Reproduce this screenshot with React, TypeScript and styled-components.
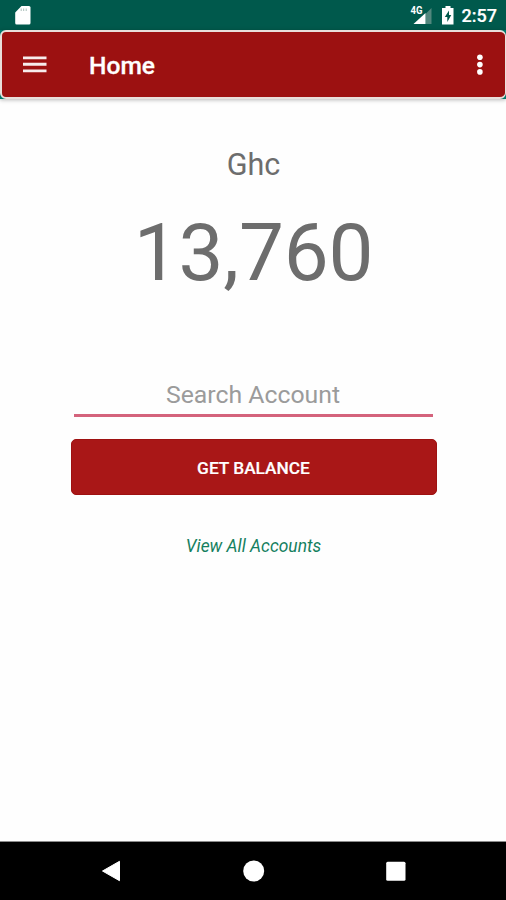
import React from 'react';
import styled, { createGlobalStyle } from 'styled-components';

const GlobalStyle = createGlobalStyle`
  * { box-sizing: border-box; }
  body { margin: 0; background: #fefefe; font-family: Roboto, "Liberation Sans", sans-serif; }
  button, input { font-family: inherit; }
`;

const Screen = styled.div`
  width: 506px;
  height: 900px;
  display: flex;
  flex-direction: column;
  background: #fefefe;
  overflow: hidden;
`;

const StatusBar = styled.div`
  height: 30px;
  flex: none;
  display: flex;
  align-items: flex-start;
  justify-content: space-between;
  background: #00594c;
  padding: 5px 9px 0 15px;
`;

const StatusGroup = styled.div`
  display: flex;
  align-items: flex-start;
`;

const Clock = styled.span`
  margin-left: 6px;
  color: #fff;
  font-size: 18px;
  font-weight: 500;
  line-height: 22px;
  -webkit-text-stroke: 0.2px #fff;
`;

const ToolbarFrame = styled.div`
  height: 69px;
  flex: none;
  background: #00796b;
  box-shadow: 0 1px 4px rgba(0, 0, 0, 0.28);
`;

const Toolbar = styled.header`
  height: 69px;
  display: flex;
  align-items: center;
  padding: 0 22px 0 21px;
  background: #9c1111;
  border: 2px solid #e9dfdb;
  border-right-width: 1px;
  border-radius: 6px;
`;

const IconButton = styled.button`
  display: flex;
  border: 0;
  padding: 0;
  background: none;
`;

const Title = styled.h1`
  flex: 1;
  margin: 3px 0 0 42px;
  color: #fff;
  font-size: 24.6px;
  font-weight: 500;
  line-height: 30px;
  -webkit-text-stroke: 0.3px #fff;
`;

const Content = styled.main`
  flex: 1;
  display: flex;
  flex-direction: column;
  align-items: center;
`;

const Currency = styled.div`
  margin: 48px 0 0 1px;
  color: #6d6d6d;
  font-size: 30.5px;
  line-height: 36px;
`;

const Balance = styled.div`
  margin: 23px 0 0 1px;
  color: #6d6d6d;
  font-size: 80px;
  letter-spacing: -0.2px;
  line-height: 94px;
`;

const SearchField = styled.input`
  width: 359px;
  height: 44px;
  margin-top: 73px;
  padding: 2px 0 0;
  border: 0;
  border-bottom: 3px solid #d4637c;
  background: none;
  text-align: center;
  font-size: 24.8px;
  color: #6d6d6d;
  &::placeholder { color: #9b9b9b; opacity: 1; }
`;

const BalanceButton = styled.button`
  width: 366px;
  height: 56px;
  margin: 22px 0 0 1px;
  padding: 1px 0 0;
  border: 1px solid #9e1111;
  border-radius: 5px;
  background: #a91717;
  color: #fff;
  font-size: 17.3px;
  font-weight: 500;
  -webkit-text-stroke: 0.2px #fff;
`;

const AccountsLink = styled.a`
  margin: 40px 0 0 1px;
  color: #15805f;
  font-size: 17.4px;
  font-style: italic;
  line-height: 22px;
`;

const NavBar = styled.nav`
  height: 59px;
  flex: none;
  display: flex;
  justify-content: space-between;
  align-items: center;
  padding: 0 99px 0 100px;
  border-top: 1px solid #8c8c8c;
  background: #000;
`;

const SdCardIcon = () => (
  <svg width="16" height="20" viewBox="0 0 16 20">
    <path d="M6.500 1H14q1.500 0 1.500 1.500v15.500q0 1.500-1.500 1.500H1.700Q.2 19.500.2 18V7.500Z" fill="#fff" />
    <path d="M6.200 3.500v2.500M8.700 3.500v2.500M11.200 3.500v2.500" stroke="#a9beb8" strokeWidth="1" />
  </svg>
);

const StatusIcons = () => (
  <svg width="46" height="22" viewBox="0 0 46 22">
    <text x="0.500" y="9" fill="#fff" fontSize="10" fontWeight="700" textLength="12" lengthAdjust="spacingAndGlyphs">4G</text>
    <path d="M15.500 9 21.500 3V19H15.500Z" fill="#51877d" />
    <path d="M3.500 19 15.500 8V19Z" fill="#fff" />
    <path d="M35.500 1h5v2h3v16.500h-11.500V3h3.500Z" fill="#fff" />
    <path d="M39 5.500 34.800 12H37.300v5l4-7h-2.300Z" fill="#00594c" />
  </svg>
);

const MenuIcon = () => (
  <svg width="24" height="20" viewBox="0 0 24 20">
    <path d="M0 2.900H23.500M0 9.300H23.500M0 15.900H23.500" stroke="#fff" strokeOpacity=".92" strokeWidth="2.900" />
  </svg>
);

const MoreIcon = () => (
  <svg width="6" height="22" viewBox="0 0 6 22" fill="#fff">
    <circle cx="2.900" cy="3.300" r="2.800" />
    <circle cx="2.900" cy="10.600" r="2.800" />
    <circle cx="2.900" cy="17.900" r="2.800" />
  </svg>
);

const BackIcon = () => (
  <svg width="22" height="24" viewBox="0 0 22 24">
    <path d="M2.500 12 19.500 2.300V21.700Z" fill="#fff" stroke="#fff" strokeLinejoin="round" />
  </svg>
);

const HomeIcon = () => (
  <svg width="22" height="22" viewBox="0 0 22 22">
    <circle cx="10.700" cy="11" r="10.500" fill="#fff" />
  </svg>
);

const RecentsIcon = () => (
  <svg width="22" height="22" viewBox="0 0 22 22">
    <rect x="1.200" y="1.700" width="19.300" height="19" rx="1.500" fill="#fff" />
  </svg>
);

export default function App() {
  return (
    <Screen>
      <GlobalStyle />
      <StatusBar>
        <SdCardIcon />
        <StatusGroup>
          <StatusIcons />
          <Clock>2:57</Clock>
        </StatusGroup>
      </StatusBar>
      <ToolbarFrame>
        <Toolbar>
          <IconButton aria-label="Menu"><MenuIcon /></IconButton>
          <Title>Home</Title>
          <IconButton aria-label="More options"><MoreIcon /></IconButton>
        </Toolbar>
      </ToolbarFrame>
      <Content>
        <Currency>Ghc</Currency>
        <Balance>13,760</Balance>
        <SearchField placeholder="Search Account" />
        <BalanceButton>GET BALANCE</BalanceButton>
        <AccountsLink>View All Accounts</AccountsLink>
      </Content>
      <NavBar>
        <BackIcon />
        <HomeIcon />
        <RecentsIcon />
      </NavBar>
    </Screen>
  );
}
